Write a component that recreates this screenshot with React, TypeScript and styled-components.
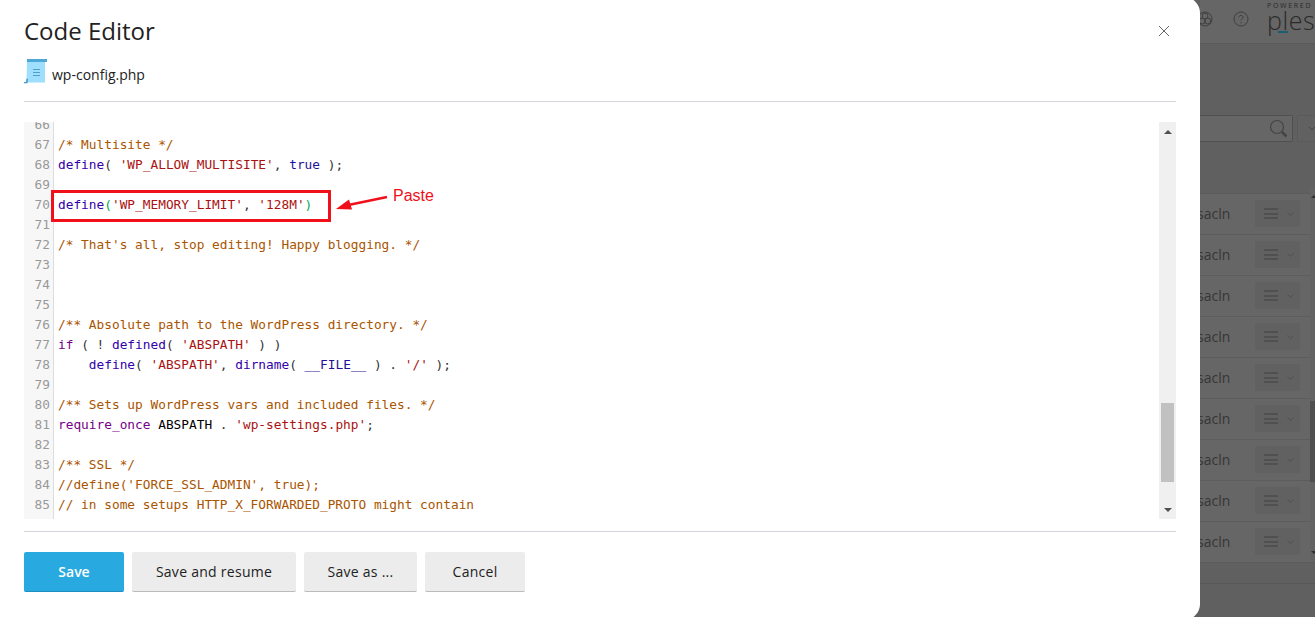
import React from "react";
import styled, { createGlobalStyle } from "styled-components";

const GlobalStyle = createGlobalStyle`
  html, body {
    margin: 0;
    padding: 0;
    height: 100%;
    overflow: hidden;
    background: #606060;
    font-family: "Open Sans", "Liberation Sans", sans-serif;
  }
  * { box-sizing: border-box; }
`;

// page

const Page = styled.div`
  display: flex;
  width: 1315px;
  height: 617px;
  overflow: hidden;
  background: #606060;
`;

const Modal = styled.div`
  flex: 0 0 1200px;
  height: 623px;
  margin-top: -3px;
  background: #fff;
  border-radius: 0 16px 16px 0;
  padding: 0 24px;
  display: flex;
  flex-direction: column;
  position: relative;
  z-index: 1;
`;

const Title = styled.h1`
  margin: 0;
  padding-top: 17px;
  height: 61px;
  font-size: 24px;
  line-height: 33px;
  font-weight: 400;
  color: #222;
`;

const CloseButton = styled.svg`
  position: absolute;
  top: 28px;
  right: 30px;
`;

const FileRow = styled.div`
  display: flex;
  align-items: center;
  gap: 5px;
  height: 43px;
  padding-bottom: 10px;
  font-size: 14px;
  color: #222;
`;

const FileGlyph = styled.svg`
  flex: none;
  margin-top: -7px;
`;

const Divider = styled.hr<{ $gap?: number }>`
  margin: ${(p) => p.$gap ?? 0}px 0 0;
  border: 0;
  border-top: 1px solid #d3d3de;
`;

// editor

const Editor = styled.div`
  position: relative;
  display: flex;
  height: 397px;
  margin-top: 20px;
  overflow: hidden;
`;

const Code = styled.div`
  flex: 1;
  margin-top: -7px;
  font-family: "DejaVu Sans Mono", "Liberation Mono", monospace;
  font-size: 12.8px;
  line-height: 20px;
  color: #222;
`;

const Line = styled.div`
  display: flex;
  height: 20px;
`;

const Gutter = styled.span`
  flex: 0 0 30px;
  padding-right: 3px;
  margin-right: 4px;
  text-align: right;
  color: #999;
  background: #f7f7f7;
  border-right: 1px solid #ddd;
`;

const LineText = styled.span`
  white-space: pre;
`;

const Tok = styled.span<{ $kind: string }>`
  color: ${(p) =>
    ({
      c: "#aa5500",
      d: "#3300aa",
      k: "#770088",
      s: "#aa1111",
      a: "#221199",
      v: "#000000",
      b: "#00aa55",
      p: "#333333",
    })[p.$kind]};
`;

const Scrollbar = styled.div`
  flex: 0 0 17px;
  background: #f0f0f0;
  display: flex;
  flex-direction: column;
  align-items: center;
  justify-content: space-between;
  padding: 8px 0 7px;
  position: relative;
`;

const ScrollArrow = styled.span<{ $down?: boolean }>`
  width: 0;
  height: 0;
  border-left: 4px solid transparent;
  border-right: 4px solid transparent;
  ${(p) =>
    p.$down ? "border-top: 4px solid #505050;" : "border-bottom: 4px solid #505050;"}
`;

const ScrollThumb = styled.div`
  position: absolute;
  left: 2px;
  right: 2px;
  top: 281px;
  height: 79px;
  background: #c1c1c1;
`;

const RedBox = styled.div`
  position: absolute;
  left: 27px;
  top: 68px;
  width: 280px;
  height: 32px;
  border: 3px solid #f0101a;
`;

const Arrow = styled.svg`
  position: absolute;
  left: 310px;
  top: 68px;
`;

const PasteLabel = styled.span`
  position: absolute;
  left: 369px;
  top: 64px;
  font-family: "Liberation Sans", Arial, sans-serif;
  font-size: 16px;
  line-height: 20px;
  color: #f0101a;
`;

// footer

const Footer = styled.div`
  display: flex;
  gap: 8px;
  padding-top: 20px;
`;

const Button = styled.button<{ $primary?: boolean; $width: number }>`
  width: ${(p) => p.$width}px;
  height: 40px;
  padding: 0;
  border: 0;
  border-bottom: 1px solid ${(p) => (p.$primary ? "#1e8fc0" : "#bbbbbb")};
  border-radius: 2px;
  background: ${(p) => (p.$primary ? "#28aae1" : "#ececec")};
  color: ${(p) => (p.$primary ? "#fff" : "#222")};
  font-family: inherit;
  font-size: 14px;
  font-weight: ${(p) => (p.$primary ? 600 : 400)};
  letter-spacing: ${(p) => (p.$primary ? 0 : 0.27)}px;
`;

// dimmed page behind the dialog

const Backdrop = styled.div`
  position: relative;
  flex: 0 0 130px;
  margin-left: -15px;
  padding-left: 15px;
  height: 617px;
  overflow: hidden;
  color: #363636;
`;

const TopBar = styled.div`
  display: flex;
  align-items: center;
  gap: 20px;
  height: 44px;
  background: #666;
  border-bottom: 1px solid #5a5a5a;
`;

const TopIcon = styled.svg<{ $first?: boolean }>`
  flex: none;
  margin-top: -5px;
  margin-left: ${(p) => (p.$first ? -3 : 0)}px;
`;

const Brand = styled.div`
  flex: none;
  align-self: flex-start;
  width: 60px;
  margin-left: -2px;
  padding-top: 2px;
  color: #2a2a2a;
`;

const Powered = styled.div`
  font-size: 7px;
  line-height: 8px;
  letter-spacing: 1.7px;
`;

const Plesk = styled.div`
  font-size: 25px;
  line-height: 24px;
  letter-spacing: 0.6px;
  margin-top: -2px;
  font-weight: 300;
  position: relative;
`;

const PleskMark = styled.span`
  position: absolute;
  left: 11px;
  bottom: -1px;
  width: 10px;
  height: 2px;
  background: #17606f;
`;

const SearchRow = styled.div`
  display: flex;
  gap: 4px;
  margin-top: 71px;
  height: 27px;
`;

const SearchBox = styled.div`
  flex: 0 0 93px;
  display: flex;
  align-items: center;
  justify-content: flex-end;
  padding-right: 3px;
  background: #666;
  border: 1px solid #505050;
  border-left: 0;
  border-radius: 0 2px 2px 0;
`;

const SearchMenu = styled.div`
  flex: 0 0 30px;
  background: #616161;
  border: 1px solid #5a5a5a;
  border-radius: 2px;
  display: flex;
  align-items: center;
  padding-left: 10px;
`;

const Rows = styled.div`
  margin-top: 51px;
  background: #666;
  border-top: 1px solid #5d5d5d;
`;

const Row = styled.div`
  display: flex;
  align-items: center;
  gap: 28px;
  height: 41px;
  border-bottom: 1px solid #5d5d5d;
  padding-bottom: 1px;
  font-size: 14px;
`;

const RowName = styled.span`
  flex: 0 0 30px;
  min-width: 0;
  margin-left: -3px;
`;

const RowMenu = styled.div`
  flex: 0 0 45px;
  height: 27px;
  background: #616161;
  border-radius: 2px;
  display: flex;
  align-items: center;
  gap: 9px;
  padding-left: 9px;
`;

const Bars = styled.span`
  width: 14px;
  height: 11px;
  border-top: 2px solid #505050;
  border-bottom: 2px solid #505050;
  position: relative;
  &::after {
    content: "";
    position: absolute;
    left: 0;
    right: 0;
    top: 2.5px;
    height: 2px;
    background: #505050;
  }
`;

const PageTrack = styled.div`
  position: absolute;
  right: 0;
  top: 187px;
  width: 5px;
  height: 373px;
  background: #636363;
`;

const PageArrow = styled.span<{ $down?: boolean }>`
  position: absolute;
  left: 1px;
  ${(p) => (p.$down ? "bottom: 6px;" : "top: 8px;")}
  border-left: 3px solid transparent;
  border-right: 3px solid transparent;
  ${(p) =>
    p.$down ? "border-top: 3px solid #2f2f2f;" : "border-bottom: 3px solid #2f2f2f;"}
`;

const PageThumb = styled.div`
  position: absolute;
  left: 0;
  right: 0;
  top: 214px;
  height: 81px;
  background: #4f4f4f;
`;

const BottomLine = styled.div`
  margin-top: 20px;
  border-top: 1px solid #585858;
`;

type Token = [string, string];

const lines: [number | "", Token[]][] = [
  [66, []],
  [67, [["c", "/* Multisite */"]]],
  [
    68,
    [
      ["d", "define"],
      ["p", "( "],
      ["s", "'WP_ALLOW_MULTISITE'"],
      ["p", ", "],
      ["a", "true"],
      ["p", " );"],
    ],
  ],
  [69, []],
  [
    70,
    [
      ["d", "define"],
      ["b", "("],
      ["s", "'WP_MEMORY_LIMIT'"],
      ["p", ", "],
      ["s", "'128M'"],
      ["b", ")"],
    ],
  ],
  [71, []],
  [72, [["c", "/* That's all, stop editing! Happy blogging. */"]]],
  [73, []],
  [74, []],
  [75, []],
  [76, [["c", "/** Absolute path to the WordPress directory. */"]]],
  [
    77,
    [
      ["k", "if"],
      ["p", " ( ! "],
      ["d", "defined"],
      ["p", "( "],
      ["s", "'ABSPATH'"],
      ["p", " ) )"],
    ],
  ],
  [
    78,
    [
      ["p", "    "],
      ["d", "define"],
      ["p", "( "],
      ["s", "'ABSPATH'"],
      ["p", ", "],
      ["d", "dirname"],
      ["p", "( "],
      ["a", "__FILE__"],
      ["p", " ) . "],
      ["s", "'/'"],
      ["p", " );"],
    ],
  ],
  [79, []],
  [80, [["c", "/** Sets up WordPress vars and included files. */"]]],
  [
    81,
    [
      ["k", "require_once"],
      ["p", " "],
      ["v", "ABSPATH"],
      ["p", " . "],
      ["s", "'wp-settings.php'"],
      ["p", ";"],
    ],
  ],
  [82, []],
  [83, [["c", "/** SSL */"]]],
  [84, [["c", "//define('FORCE_SSL_ADMIN', true);"]]],
  [85, [["c", "// in some setups HTTP_X_FORWARDED_PROTO might contain"]]],
  ["", []],
];

const FileIcon = () => (
  <FileGlyph width="23" height="25" viewBox="0 0 23 25">
    <path d="M3 1h18v22.5H2.5z" fill="#9fdefc" />
    <path d="M3 0h20v3H3z" fill="#4ea8d5" />
    <path d="M2.5 19.5L2 23H0v1.2h3.5L4 20z" fill="#3d9ccb" />
    <path d="M9 10h7v1H9zM9 13h7v1H9zM9 16h7v1H9z" fill="#4d9fcc" />
  </FileGlyph>
);

const App = () => {
  return (
    <Page>
      <GlobalStyle />
      <Modal>
        <Title>Code Editor</Title>
        <CloseButton width="12" height="12" viewBox="0 0 12 12">
          <path d="M1 1l10 10M11 1L1 11" stroke="#666" strokeWidth="1" fill="none" />
        </CloseButton>
        <FileRow>
          <FileIcon />
          wp-config.php
        </FileRow>
        <Divider />
        <Editor>
          <Code>
            {lines.map(([num, tokens], n) => (
              <Line key={n}>
                <Gutter>{num}</Gutter>
                <LineText>
                  {tokens.map(([kind, text], i) => (
                    <Tok key={i} $kind={kind}>
                      {text}
                    </Tok>
                  ))}
                </LineText>
              </Line>
            ))}
          </Code>
          <Scrollbar>
            <ScrollArrow />
            <ScrollThumb />
            <ScrollArrow $down />
          </Scrollbar>
          <RedBox />
          <Arrow width="56" height="24" viewBox="0 0 56 24">
            <path d="M53 7L12 15.5" stroke="#f0101a" strokeWidth="2.5" fill="none" />
            <path d="M2 19L15 9.5l3 10z" fill="#f0101a" />
          </Arrow>
          <PasteLabel>Paste</PasteLabel>
        </Editor>
        <Divider $gap={12} />
        <Footer>
          <Button $primary $width={100}>
            Save
          </Button>
          <Button $width={164}>Save and resume</Button>
          <Button $width={113}>Save as ...</Button>
          <Button $width={100}>Cancel</Button>
        </Footer>
      </Modal>
      <Backdrop>
        <TopBar>
          <TopIcon $first width="16" height="16" viewBox="0 0 16 16">
            <circle cx="8" cy="8" r="7" stroke="#3f3f3f" fill="none" />
            <circle cx="8" cy="5" r="3" stroke="#3f3f3f" fill="none" />
            <circle cx="5.2" cy="10" r="3" stroke="#3f3f3f" fill="none" />
            <circle cx="10.8" cy="10" r="3" stroke="#3f3f3f" fill="none" />
          </TopIcon>
          <TopIcon width="16" height="16" viewBox="0 0 16 16">
            <circle cx="8" cy="8" r="7" stroke="#3f3f3f" fill="none" />
            <path d="M6 6.3C6 3.8 10 3.8 10 6.2 10 7.8 8 7.8 8 9.5M8 11v1.3" stroke="#3f3f3f" fill="none" />
          </TopIcon>
          <Brand>
            <Powered>POWERED</Powered>
            <Plesk>
              plesk
              <PleskMark />
            </Plesk>
          </Brand>
        </TopBar>
        <SearchRow>
          <SearchBox>
            <svg width="20" height="20" viewBox="0 0 20 20">
              <circle cx="8" cy="8" r="6.5" stroke="#444" strokeWidth="1.2" fill="none" />
              <path d="M13 13l4.5 4.5" stroke="#444" strokeWidth="2.5" fill="none" />
            </svg>
          </SearchBox>
          <SearchMenu>
            <svg width="8" height="5" viewBox="0 0 8 5">
              <path d="M1 1l3 3 3-3" stroke="#444" fill="none" />
            </svg>
          </SearchMenu>
        </SearchRow>
        <Rows>
          {Array.from({ length: 9 }, (_, i) => (
            <Row key={i}>
              <RowName>sacln</RowName>
              <RowMenu>
                <Bars />
                <svg width="7" height="4" viewBox="0 0 7 4">
                  <path d="M.5.5l3 3 3-3" stroke="#4f4f4f" fill="none" />
                </svg>
              </RowMenu>
            </Row>
          ))}
        </Rows>
        <PageTrack>
          <PageArrow />
          <PageThumb />
          <PageArrow $down />
        </PageTrack>
        <BottomLine />
      </Backdrop>
    </Page>
  );
};

export default App;
